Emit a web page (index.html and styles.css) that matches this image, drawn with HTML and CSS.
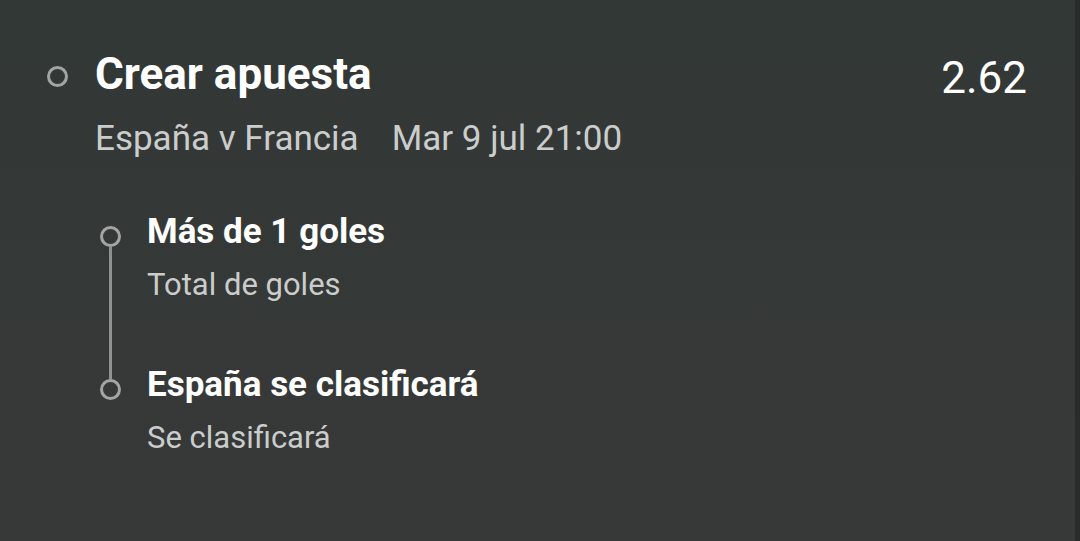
FILE: index.html
```
<html>
<head>
	<meta charset="utf-8">
	<title>Crear apuesta</title>
	<link rel="stylesheet" href="styles.css">
</head>
<body>
	<section class="bet">
		<div class="bet-head">
			<span class="dot dot-main"></span>
			<h1 class="bet-title">Crear apuesta</h1>
			<div class="bet-odds">2.62</div>
		</div>
		<div class="bet-event">
			<span>España v Francia</span>
			<span>Mar 9 jul 21:00</span>
		</div>
		<ul class="legs">
			<li class="leg">
				<span class="dot"></span>
				<div class="leg-name">Más de 1 goles</div>
				<div class="leg-market">Total de goles</div>
			</li>
			<li class="leg">
				<span class="dot"></span>
				<div class="leg-name">España se clasificará</div>
				<div class="leg-market">Se clasificará</div>
			</li>
		</ul>
	</section>
	<div class="edge"></div>
</body>
</html>
```

FILE: styles.css
```
html, body {
	margin: 0;
	height: 100%;
}
body {
	background: linear-gradient(#323836, #373938);
	font-family: Roboto, "Noto Sans", sans-serif;
	color: #fff;
	display: flex;
}
.bet {
	flex: 1;
	padding: 48px 48px 0 47px;
}
.edge {
	width: 5px;
	background: #292b2a;
}
.dot {
	box-sizing: border-box;
	width: 21px;
	height: 21px;
	border: 3px solid #a3a5a4;
	border-radius: 50%;
	display: block;
}
.bet-head {
	display: flex;
	align-items: flex-start;
}
.dot-main {
	margin: 18px 27px 0 0;
}
.bet-title {
	margin: 0;
	font-size: 44px;
	font-weight: 700;
	line-height: 52px;
	flex: 1;
}
.bet-odds {
	font-size: 44px;
	line-height: 52px;
	padding-top: 4px;
}
.bet-event {
	margin: 13px 0 0 48px;
	display: flex;
	gap: 33px;
	font-size: 35px;
	line-height: 44px;
	color: #cbcdcc;
}
.legs {
	list-style: none;
	margin: 49px 0 0 53px;
	padding: 0;
}
.leg {
	position: relative;
	padding-left: 47px;
	height: 153px;
}
.leg .dot {
	position: absolute;
	left: 0;
	top: 16px;
}
.leg:first-child::after {
	content: "";
	position: absolute;
	left: 9px;
	top: 36px;
	bottom: -16px;
	width: 3px;
	background: #8e9290;
}
.leg-name {
	font-size: 35px;
	font-weight: 700;
	line-height: 44px;
}
.leg-market {
	margin-top: 11px;
	font-size: 31px;
	line-height: 40px;
	color: #cbcdcc;
}
```
